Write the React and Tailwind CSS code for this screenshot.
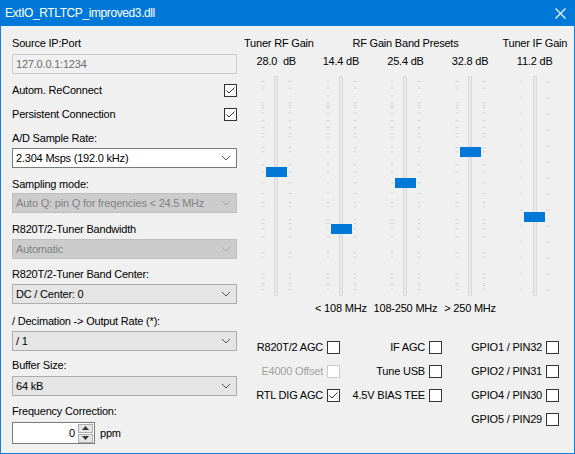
const FONT = { fontFamily: '"Liberation Sans", Arial, sans-serif' };

// R820T gain table (dB), tick marks for the RF sliders
const RF_TICKS = [0, 0.9, 1.4, 2.7, 3.7, 7.7, 8.7, 12.5, 14.4, 15.7, 16.6, 19.7, 20.7, 22.9, 25.4, 28.0, 29.7, 32.8, 33.8, 36.4, 37.2, 38.6, 40.2, 42.1, 43.4, 43.9, 44.5, 48.0, 49.6];
const rfY = (v) => 213.3 - v * 4.19;
const IF_TICKS = Array.from({ length: 14 }, (_, i) => 6 + i * 16);

function Chevron({ color = '#333' }) {
  return (
    <svg width="10" height="6" viewBox="0 0 10 6">
      <polyline points="1,1 5,5 9,1" fill="none" stroke={color} strokeWidth="1" />
    </svg>
  );
}

function Combo({ value, variant = 'normal' }) {
  const styles = {
    focus: 'bg-white border-[#7a7a7a] text-black',
    normal: 'bg-[#e5e5e5] border-[#adadad] text-black',
    disabled: 'bg-[#cccccc] border-[#bfbfbf] text-[#838383]',
  };
  return (
    <div className={`h-[20px] w-full border flex items-center justify-between pl-[3px] pr-[5px] ${styles[variant]}`}>
      <span>{value}</span>
      <Chevron color={variant === 'disabled' ? '#a3a3a3' : '#555'} />
    </div>
  );
}

function Check({ checked, disabled }) {
  return (
    <div className={`w-[13px] h-[13px] border bg-white shrink-0 ${disabled ? 'border-[#cccccc]' : 'border-[#333]'}`}>
      {checked && (
        <svg width="11" height="11" viewBox="0 0 11 11">
          <polyline points="1.5,5.5 4,8 9.5,2.5" fill="none" stroke="#333" strokeWidth="1" />
        </svg>
      )}
    </div>
  );
}

function Slider({ ticks, thumbY }) {
  return (
    <div className="relative w-[64.6px] h-[220px]">
      <svg className="absolute inset-0" width="64.6" height="220">
        {ticks.map((y, i) => (
          <g key={i}>
            <line x1="17.5" x2="20.5" y1={y} y2={y} stroke="#d2d2d2" strokeWidth="1" />
            <line x1="44.5" x2="47.5" y1={y} y2={y} stroke="#d2d2d2" strokeWidth="1" />
          </g>
        ))}
      </svg>
      <div className="absolute left-[30.3px] top-0 w-[4px] h-[220px] bg-[#e9e9e9] border border-[#d9d9d9]" />
      <div
        className="absolute left-[22px] w-[21px] h-[10px] bg-[#0078d7]"
        style={{ top: thumbY - 5 }}
      />
    </div>
  );
}

function CheckRow({ label, checked, disabled }) {
  return (
    <div className="h-[24px] flex items-center justify-end gap-[4px]">
      <span className={disabled ? 'text-[#a0a0a0]' : 'text-black'}>{label}</span>
      <Check checked={checked} disabled={disabled} />
    </div>
  );
}

export default function App() {
  const rfTicks = RF_TICKS.map(rfY);
  return (
    <div className="w-[575px] h-[454px] flex flex-col bg-[#f0f0f0] text-[11px] leading-[13px] tracking-[-0.2px] text-black" style={FONT}>
      {/* Title bar */}
      <div className="h-[26px] bg-[#0078d7] flex items-center justify-between pl-[5px] pr-[9px] shrink-0">
        <span className="text-white text-[12px] tracking-[-0.4px]">ExtIO_RTLTCP_improved3.dll</span>
        <svg width="11" height="11" viewBox="0 0 11 11">
          <path d="M0.5 0.5 L10.5 10.5 M10.5 0.5 L0.5 10.5" stroke="white" strokeWidth="1.1" />
        </svg>
      </div>

      <div className="flex-1 flex border-x border-b border-[#1a7fd4]">
        {/* Left column */}
        <div className="ml-[11px] w-[225px] pt-[11px] flex flex-col">
          <div className="h-[13px]">Source IP:Port</div>
          <div className="mt-[4px] h-[20px] border border-[#cccccc] bg-[#f0f0f0] text-[#6d6d6d] flex items-center pl-[3px]">127.0.0.1:1234</div>
          <div className="mt-[4px] h-[24px] flex items-center justify-between">
            <span>Autom. ReConnect</span>
            <Check checked />
          </div>
          <div className="h-[24px] flex items-center justify-between">
            <span>Persistent Connection</span>
            <Check checked />
          </div>
          <div className="mt-[6px] h-[13px]">A/D Sample Rate:</div>
          <div className="mt-[3px]"><Combo value="2.304 Msps (192.0 kHz)" variant="focus" /></div>
          <div className="mt-[10px] h-[13px]">Sampling mode:</div>
          <div className="mt-[2px]"><Combo value="Auto Q: pin Q for freqencies < 24.5 MHz" variant="disabled" /></div>
          <div className="mt-[10px] h-[13px]">R820T/2-Tuner Bandwidth</div>
          <div className="mt-[3px]"><Combo value="Automatic" variant="disabled" /></div>
          <div className="mt-[9px] h-[13px]">R820T/2-Tuner Band Center:</div>
          <div className="mt-[3px]"><Combo value="DC / Center: 0" /></div>
          <div className="mt-[11px] h-[13px]">/ Decimation -&gt; Output Rate (*):</div>
          <div className="mt-[3px]"><Combo value="/ 1" /></div>
          <div className="mt-[8px] h-[13px]">Buffer Size:</div>
          <div className="mt-[4px]"><Combo value="64 kB" /></div>
          <div className="mt-[9px] h-[13px]">Frequency Correction:</div>
          <div className="mt-[4px] flex items-center gap-[5px]">
            <div className="w-[83px] h-[22px] border border-[#7a7a7a] bg-white flex items-center justify-end pr-[1px]">
              <span className="mr-[3px]">0</span>
              <div className="flex flex-col gap-[1px]">
                <div className="w-[15px] h-[9px] bg-[#e5e5e5] border border-[#adadad] flex items-center justify-center">
                  <svg width="7" height="4" viewBox="0 0 7 4"><polygon points="0,4 3.5,0 7,4" fill="#333" /></svg>
                </div>
                <div className="w-[15px] h-[9px] bg-[#e5e5e5] border border-[#adadad] flex items-center justify-center">
                  <svg width="7" height="4" viewBox="0 0 7 4"><polygon points="0,0 3.5,4 7,0" fill="#333" /></svg>
                </div>
              </div>
            </div>
            <span>ppm</span>
          </div>
        </div>

        {/* Right column */}
        <div className="pt-[11px] flex flex-col">
          <div className="pl-[7px] h-[13px] flex">
            <div className="w-[64.6px] text-center whitespace-nowrap">Tuner RF Gain</div>
            <div className="w-[193.8px] text-center">RF Gain Band Presets</div>
            <div className="w-[64.6px] text-center whitespace-nowrap">Tuner IF Gain</div>
          </div>
          <div className="pl-[7px] mt-[5px] h-[13px] flex">
            {['28.0  dB', '14.4 dB', '25.4 dB', '32.8 dB', '11.2 dB'].map((v) => (
              <div key={v} className="w-[64.6px] text-center whitespace-pre">{v}</div>
            ))}
          </div>
          <div className="pl-[7px] mt-[8px] flex">
            <Slider ticks={rfTicks} thumbY={rfY(28.0)} />
            <Slider ticks={rfTicks} thumbY={rfY(14.4)} />
            <Slider ticks={rfTicks} thumbY={rfY(25.4)} />
            <Slider ticks={rfTicks} thumbY={rfY(32.8)} />
            <Slider ticks={IF_TICKS} thumbY={140.7} />
          </div>
          <div className="pl-[71.6px] mt-[6px] h-[13px] flex">
            <div className="w-[64.6px] text-center whitespace-nowrap">&lt; 108 MHz</div>
            <div className="w-[64.6px] text-center whitespace-nowrap">108-250 MHz</div>
            <div className="w-[64.6px] text-center whitespace-nowrap">&gt; 250 MHz</div>
          </div>
          <div className="mt-[20px] flex">
            <div className="w-[103px] flex flex-col">
              <CheckRow label="R820T/2 AGC" />
              <CheckRow label="E4000 Offset" disabled />
              <CheckRow label="RTL DIG AGC" checked />
            </div>
            <div className="w-[102px] flex flex-col">
              <CheckRow label="IF AGC" />
              <CheckRow label="Tune USB" />
              <CheckRow label="4.5V BIAS TEE" />
            </div>
            <div className="w-[117px] flex flex-col">
              <CheckRow label="GPIO1 / PIN32" />
              <CheckRow label="GPIO2 / PIN31" />
              <CheckRow label="GPIO4 / PIN30" />
              <CheckRow label="GPIO5 / PIN29" />
            </div>
          </div>
        </div>
      </div>
    </div>
  );
}
